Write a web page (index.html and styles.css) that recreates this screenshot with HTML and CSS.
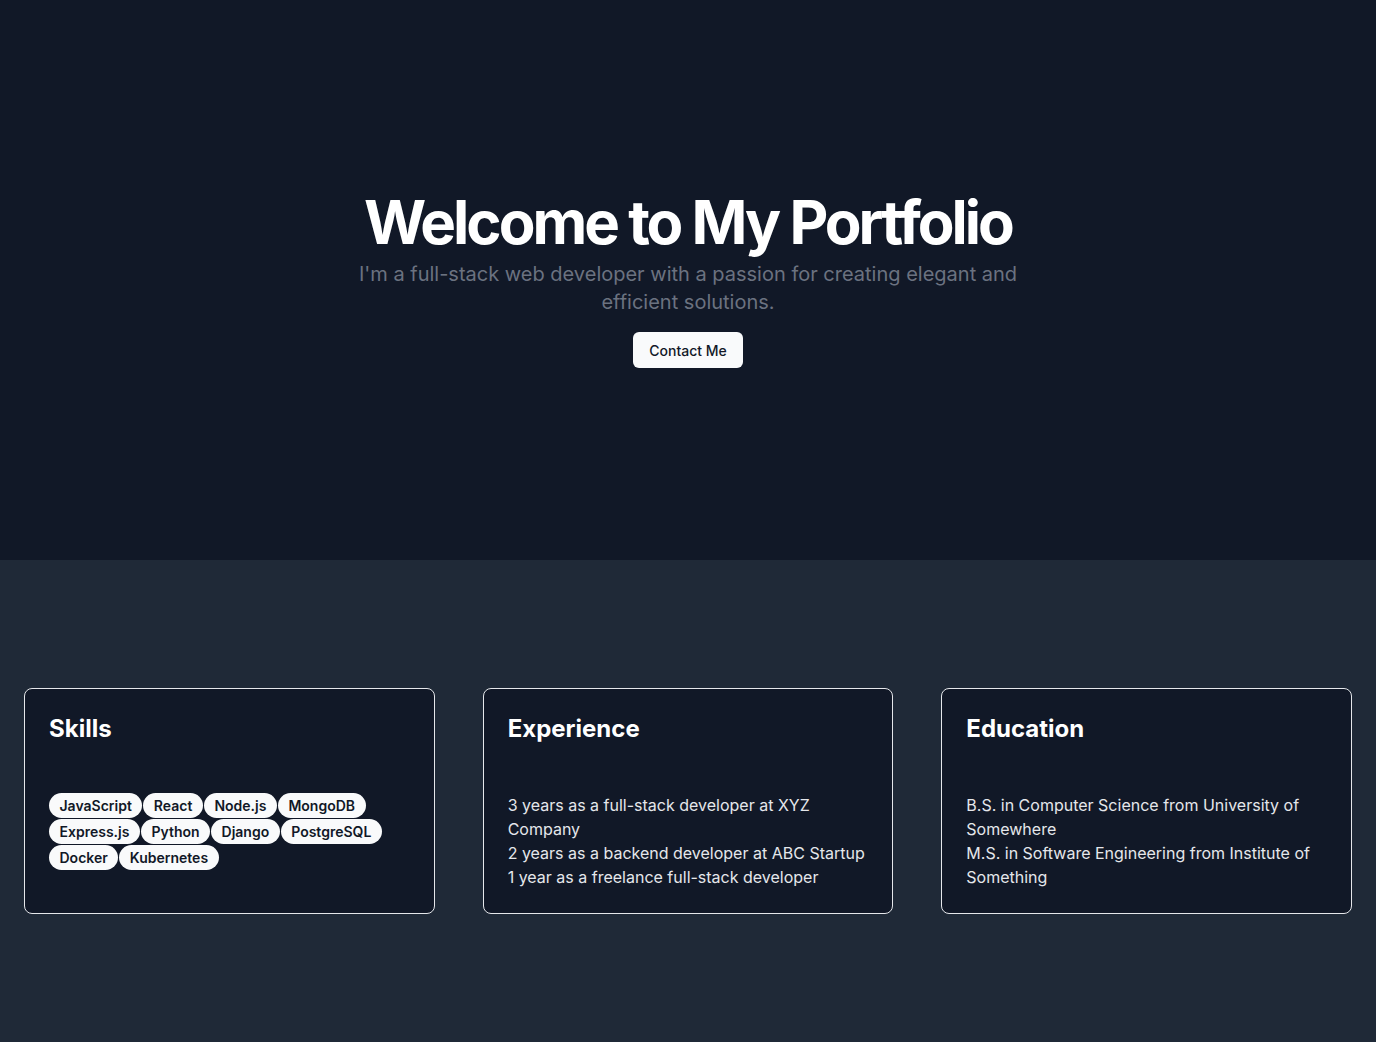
FILE: index.html
```html
<!DOCTYPE html>
<html lang="en">
<head>
<meta charset="utf-8">
<title>Portfolio</title>
<link rel="stylesheet" href="styles.css">
</head>
<body>
<main class="page">
  <section class="hero">
    <div class="hero-inner">
      <div class="hero-text">
        <h1 class="hero-title">Welcome to My Portfolio</h1>
        <p class="hero-sub">I'm a full-stack web developer with a passion for creating elegant and efficient solutions.</p>
      </div>
      <button class="btn">Contact Me</button>
    </div>
  </section>
  <section class="info">
    <div class="grid">
      <div class="card">
        <h3 class="card-title">Skills</h3>
        <div class="card-body">
          <div class="badges">
            <span class="badge">JavaScript</span>
            <span class="badge">React</span>
            <span class="badge">Node.js</span>
            <span class="badge">MongoDB</span>
            <span class="badge">Express.js</span>
            <span class="badge">Python</span>
            <span class="badge">Django</span>
            <span class="badge">PostgreSQL</span>
            <span class="badge">Docker</span>
            <span class="badge">Kubernetes</span>
          </div>
        </div>
      </div>
      <div class="card">
        <h3 class="card-title">Experience</h3>
        <div class="card-body">
          <ul class="list">
            <li>3 years as a full-stack developer at XYZ Company</li>
            <li>2 years as a backend developer at ABC Startup</li>
            <li>1 year as a freelance full-stack developer</li>
          </ul>
        </div>
      </div>
      <div class="card">
        <h3 class="card-title">Education</h3>
        <div class="card-body">
          <ul class="list">
            <li>B.S. in Computer Science from University of Somewhere</li>
            <li>M.S. in Software Engineering from Institute of Something</li>
          </ul>
        </div>
      </div>
    </div>
  </section>
</main>
</body>
</html>
```
FILE: styles.css
```css
* { box-sizing: border-box; }
html, body { margin: 0; padding: 0; }
body {
  font-family: Inter, "Noto Sans", sans-serif;
  background: #1f2937;
  color: #ffffff;
}
.page { display: flex; flex-direction: column; min-height: 100vh; }
.hero {
  background: #111827;
  padding: 192px 24px;
}
.hero-inner {
  display: flex;
  flex-direction: column;
  align-items: center;
  gap: 16px;
  text-align: center;
}
.hero-text { display: flex; flex-direction: column; align-items: center; gap: 8px; }
.hero-title {
  margin: 0;
  font-size: 60px;
  line-height: 60px;
  font-weight: 700;
  letter-spacing: -0.05em;
  color: #ffffff;
}
.hero-sub {
  margin: 0;
  max-width: 700px;
  font-size: 20px;
  line-height: 28px;
  color: #6b7280;
}
.btn {
  height: 36px;
  padding: 0 16px;
  border: none;
  border-radius: 6px;
  background: #f9fafb;
  color: #111827;
  font-family: inherit;
  font-size: 14px;
  font-weight: 500;
}
.info {
  flex: 1;
  background: #1f2937;
  padding: 128px 24px;
}
.grid {
  display: grid;
  grid-template-columns: repeat(3, 1fr);
  gap: 48px;
}
.card {
  background: #111827;
  border: 1px solid #e5e7eb;
  border-radius: 8px;
  padding: 24px;
  display: flex;
  flex-direction: column;
}
.card-title {
  margin: 0;
  font-size: 24px;
  line-height: 32px;
  font-weight: 700;
  color: #ffffff;
}
.card-body { margin-top: 48px; }
.badges { display: flex; flex-wrap: wrap; gap: 1px; }
.badge {
  display: inline-flex;
  align-items: center;
  height: 25px;
  padding: 0 10.5px;
  border-radius: 999px;
  background: #f9fafb;
  color: #111827;
  font-size: 14px;
  font-weight: 600;
}
.list {
  margin: 0;
  padding: 0;
  list-style: none;
  font-size: 16px;
  line-height: 24px;
  color: #e5e7eb;
}
```
